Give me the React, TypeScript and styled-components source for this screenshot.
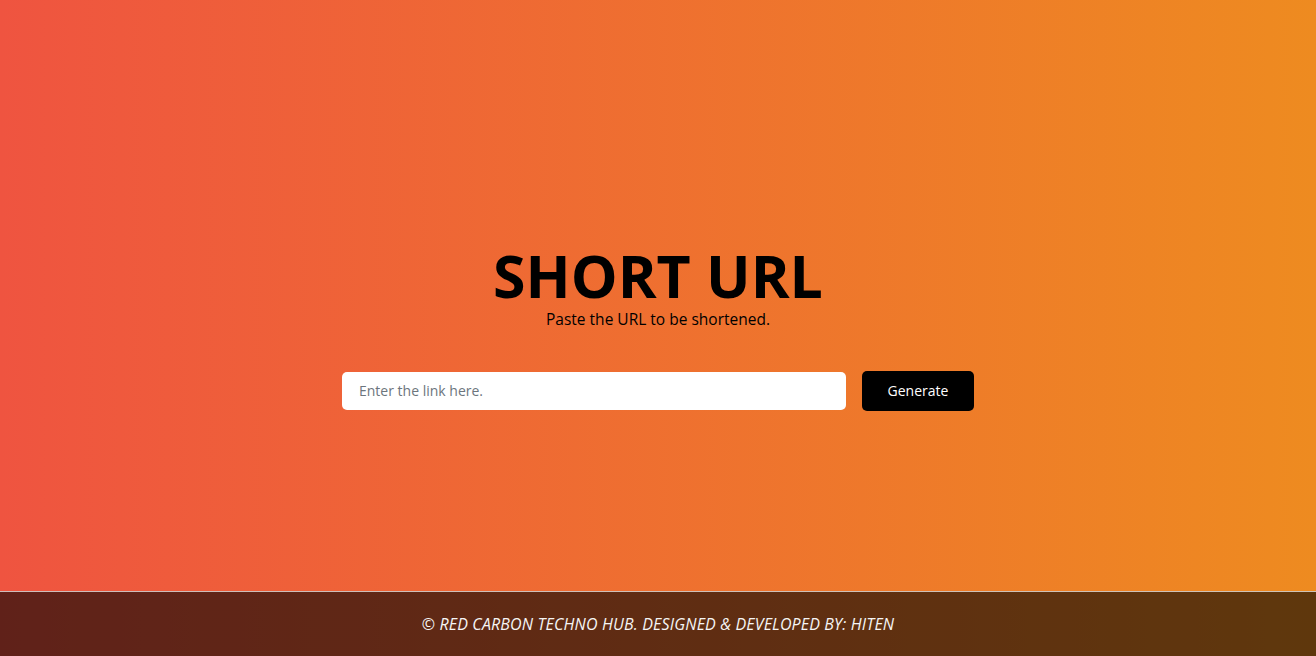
import React from "react";
import styled, { createGlobalStyle } from "styled-components";

const Global = createGlobalStyle`
  html, body { margin: 0; padding: 0; }
  body {
    font-family: "Open Sans", "Noto Sans", sans-serif;
    background: linear-gradient(to right, #ef5440, #ee8b20);
    min-height: 100vh;
  }
`;

const Page = styled.div`
  min-height: 100vh;
  display: flex;
  flex-direction: column;
`;

const Main = styled.main`
  flex: 1;
  display: flex;
  flex-direction: column;
  align-items: center;
  justify-content: center;
  padding-top: 64px;
`;

const Title = styled.h1`
  margin: 0;
  font-size: 59px;
  line-height: 60px;
  font-weight: 700;
  color: #000;
`;

const Subtitle = styled.p`
  margin: 4px 0 0;
  font-size: 15.5px;
  line-height: 20px;
  color: #000;
`;

const Form = styled.form`
  display: flex;
  align-items: center;
  gap: 16px;
  margin-top: 42px;
`;

const Input = styled.input`
  width: 504px;
  height: 38px;
  box-sizing: border-box;
  border: none;
  border-radius: 5px;
  background: #fff;
  padding: 0 17px;
  font-family: inherit;
  font-size: 14px;
  outline: none;
  &::placeholder { color: #6c757d; }
`;

const Button = styled.button`
  width: 112px;
  height: 40px;
  border: none;
  border-radius: 5px;
  background: #000;
  color: #fff;
  font-family: inherit;
  font-size: 14px;
  cursor: pointer;
`;

const Footer = styled.footer`
  height: 64px;
  border-top: 1px solid rgba(255, 255, 255, 0.7);
  background: rgba(0, 0, 0, 0.6);
  display: flex;
  align-items: center;
  justify-content: center;
  color: #f5f5f5;
  font-style: italic;
  font-size: 16px;
  letter-spacing: 0.15px;
`;

export default function App() {
  return (
    <>
      <Global />
      <Page>
        <Main>
          <Title>SHORT URL</Title>
          <Subtitle>Paste the URL to be shortened.</Subtitle>
          <Form onSubmit={(e) => e.preventDefault()}>
            <Input type="text" placeholder="Enter the link here." />
            <Button type="submit">Generate</Button>
          </Form>
        </Main>
        <Footer>© RED CARBON TECHNO HUB. DESIGNED &amp; DEVELOPED BY: HITEN</Footer>
      </Page>
    </>
  );
}
